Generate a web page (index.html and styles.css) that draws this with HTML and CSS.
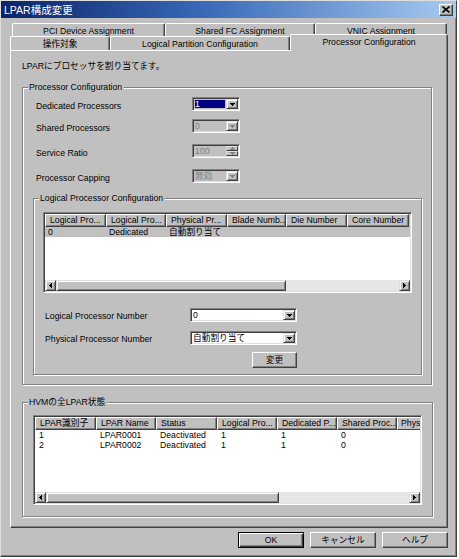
FILE: index.html
```html
<!DOCTYPE html>
<html>
<head>
<meta charset="utf-8">
<link rel="stylesheet" href="styles.css">
</head>
<body>
<div class="window">
  <div class="titlebar">
    <span class="title">LPAR構成変更</span>
    <span class="close"><svg width="8" height="7" viewBox="0 0 8 7"><path d="M0.5 0.5L7.5 6.5M7.5 0.5L0.5 6.5" stroke="#000" stroke-width="1.6"/></svg></span>
  </div>
  <div class="tabs">
    <div class="tabrow row1">
      <div class="tab tw-pci">PCI Device Assignment</div>
      <div class="tab tw-fc">Shared FC Assignment</div>
      <div class="tab tw-vnic">VNIC Assignment</div>
    </div>
    <div class="tabrow row2">
      <div class="tab tw-target">操作対象</div>
      <div class="tab tw-lpc">Logical Partition Configuration</div>
      <div class="tab tw-proc active">Processor Configuration</div>
    </div>
  </div>
  <div class="panel">
    <p class="desc">LPARにプロセッサを割り当てます。</p>
    <div class="group g1">
      <span class="legend">Processor Configuration</span>
      <div class="frow r1">
        <span class="flabel">Dedicated Processors</span>
        <div class="combo cw-s">
          <span class="cfield selected"><span class="seltext">1</span></span>
          <span class="cbtn"><svg width="5" height="3" viewBox="0 0 5 3"><path d="M0 0H5V1H4V2H3V3H2V2H1V1H0Z"/></svg></span>
        </div>
      </div>
      <div class="frow r2">
        <span class="flabel">Shared Processors</span>
        <div class="combo cw-s disabled">
          <span class="cfield">0</span>
          <span class="cbtn"><svg width="5" height="3" viewBox="0 0 5 3"><path d="M0 0H5V1H4V2H3V3H2V2H1V1H0Z"/></svg></span>
        </div>
      </div>
      <div class="frow r3">
        <span class="flabel">Service Ratio</span>
        <div class="combo cw-s disabled">
          <span class="cfield">100</span>
          <span class="spin">
            <span class="sbtnh"><svg width="5" height="3" viewBox="0 0 5 3"><path d="M2 0H3V1H4V2H5V3H0V2H1V1H2Z"/></svg></span>
            <span class="sbtnh"><svg width="5" height="3" viewBox="0 0 5 3"><path d="M0 0H5V1H4V2H3V3H2V2H1V1H0Z"/></svg></span>
          </span>
        </div>
      </div>
      <div class="frow r4">
        <span class="flabel">Processor Capping</span>
        <div class="combo cw-s disabled">
          <span class="cfield">無効</span>
          <span class="cbtn"><svg width="5" height="3" viewBox="0 0 5 3"><path d="M0 0H5V1H4V2H3V3H2V2H1V1H0Z"/></svg></span>
        </div>
      </div>

      <div class="group g2">
        <span class="legend">Logical Processor Configuration</span>
        <div class="lv lv1">
          <div class="lvgrid lvhead">
            <span class="hcell">Logical Pro...</span>
            <span class="hcell">Logical Pro...</span>
            <span class="hcell">Physical Pr...</span>
            <span class="hcell">Blade Numb...</span>
            <span class="hcell">Die Number</span>
            <span class="hcell">Core Number</span>
            <span class="hfill"></span>
          </div>
          <div class="lvgrid lvrow selrow">
            <span class="cell">0</span>
            <span class="cell">Dedicated</span>
            <span class="cell">自動割り当て</span>
            <span class="cell"></span>
            <span class="cell"></span>
            <span class="cell"></span>
            <span class="cell"></span>
          </div>
          <div class="lvbody"></div>
          <div class="hscroll">
            <span class="sbtn"><svg width="3" height="5" viewBox="0 0 3 5"><path d="M3 0V5H2V4H1V3H0V2H1V1H2V0Z"/></svg></span>
            <span class="thumb thumb1"></span>
            <span class="track"></span>
            <span class="sbtn"><svg width="3" height="5" viewBox="0 0 3 5"><path d="M0 0V5H1V4H2V3H3V2H2V1H1V0Z"/></svg></span>
          </div>
        </div>

        <div class="frow r5">
          <span class="flabel2">Logical Processor Number</span>
          <div class="combo cw-l">
            <span class="cfield white">0</span>
            <span class="cbtn"><svg width="5" height="3" viewBox="0 0 5 3"><path d="M0 0H5V1H4V2H3V3H2V2H1V1H0Z"/></svg></span>
          </div>
        </div>
        <div class="frow r6">
          <span class="flabel2">Physical Processor Number</span>
          <div class="combo cw-l">
            <span class="cfield white">自動割り当て</span>
            <span class="cbtn"><svg width="5" height="3" viewBox="0 0 5 3"><path d="M0 0H5V1H4V2H3V3H2V2H1V1H0Z"/></svg></span>
          </div>
        </div>
        <div class="btnrow">
          <span class="btn btn-change">変更</span>
        </div>
      </div>
    </div>

    <div class="group g3">
      <span class="legend">HVMの全LPAR状態</span>
      <div class="lv lv2">
        <div class="lvgrid lvhead">
          <span class="hcell">LPAR識別子</span>
          <span class="hcell">LPAR Name</span>
          <span class="hcell">Status</span>
          <span class="hcell">Logical Pro...</span>
          <span class="hcell">Dedicated P...</span>
          <span class="hcell">Shared Proc...</span>
          <span class="hcell hlast">Phys</span>
        </div>
        <div class="lvgrid lvrow">
          <span class="cell">1</span>
          <span class="cell">LPAR0001</span>
          <span class="cell">Deactivated</span>
          <span class="cell">1</span>
          <span class="cell">1</span>
          <span class="cell">0</span>
          <span class="cell"></span>
        </div>
        <div class="lvgrid lvrow">
          <span class="cell">2</span>
          <span class="cell">LPAR0002</span>
          <span class="cell">Deactivated</span>
          <span class="cell">1</span>
          <span class="cell">1</span>
          <span class="cell">0</span>
          <span class="cell"></span>
        </div>
        <div class="lvbody"></div>
        <div class="hscroll">
          <span class="sbtn"><svg width="3" height="5" viewBox="0 0 3 5"><path d="M3 0V5H2V4H1V3H0V2H1V1H2V0Z"/></svg></span>
          <span class="thumb thumb2"></span>
          <span class="track"></span>
          <span class="sbtn"><svg width="3" height="5" viewBox="0 0 3 5"><path d="M0 0V5H1V4H2V3H3V2H2V1H1V0Z"/></svg></span>
        </div>
      </div>
    </div>
  </div>
  <div class="buttons">
    <span class="btn btn-main default">OK</span>
    <span class="btn btn-main">キャンセル</span>
    <span class="btn btn-main">ヘルプ</span>
  </div>
</div>
</body>
</html>
```

FILE: styles.css
```css
* { box-sizing: border-box; }

body {
  margin: 0;
  background: #ffffff;
  font-family: "Liberation Sans", "Noto Sans CJK JP", sans-serif;
  font-size: 8.7px;
  color: #000;
}

.window {
  width: 457px;
  height: 557px;
  background: #c0c0c0;
  border: 1px solid;
  border-color: #dfdfdf #404040 #404040 #dfdfdf;
  box-shadow: inset -1px -1px #808080;
  display: flex;
  flex-direction: column;
}

/* title bar */
.titlebar {
  height: 17px;
  flex: none;
  background: linear-gradient(90deg, #0a246a 0%, #3a6ab8 45%, #a6caf0 100%);
  display: flex;
  align-items: center;
  justify-content: space-between;
  padding: 0 3px 0 3px;
}
.title {
  color: #fff;
  font-size: 10.5px;
  line-height: 12px;
}
.close {
  width: 14px;
  height: 12px;
  background: #c0c0c0;
  border: 1px solid;
  border-color: #fff #404040 #404040 #fff;
  box-shadow: inset -1px -1px #808080;
  display: flex;
  align-items: center;
  justify-content: center;
}

/* tabs */
.tabs { margin-top: 5px; flex: none; }
.tabrow { display: flex; }
.row1 { height: 13px; margin-left: 11px; }
.row2 { height: 14px; margin-left: 9px; }
.tab {
  height: 100%;
  border: 1px solid;
  border-bottom: none;
  border-color: #fff #404040 #fff #fff;
  border-radius: 2px 2px 0 0;
  box-shadow: inset -1px 0 #808080;
  display: flex;
  align-items: center;
  justify-content: center;
  white-space: nowrap;
  line-height: 10px;
  background: #c0c0c0;
}
.row1 .tab { padding-top: 1px; }
.tw-pci { width: 153px; }
.tw-fc { width: 150px; }
.tw-vnic { width: 132px; }
.tw-target { width: 100px; }
.tw-lpc { width: 180px; }
.tw-proc { width: 158px; }
.tab.active {
  height: 17px;
  margin-top: -2px;
  position: relative;
  z-index: 1;
  align-items: flex-start;
  padding-top: 2px;
}

/* panel */
.panel {
  flex: none;
  margin-left: 9px;
  width: 438px;
  height: 478px;
  border: 1px solid;
  border-color: #fff #404040 #404040 #fff;
  box-shadow: inset -1px -1px #808080;
  padding: 9px 0 0 11px;
}
.desc {
  margin: 0;
  height: 12px;
  line-height: 12px;
}

/* group boxes */
.group {
  position: relative;
  border: 1px solid #808080;
  box-shadow: inset 1px 1px #fff, 1px 1px #fff;
}
.legend {
  position: absolute;
  top: -7px;
  left: 5px;
  padding: 0 2px 0 1px;
  background: #c0c0c0;
  line-height: 12px;
  white-space: nowrap;
}
.g1 {
  margin-top: 15px;
  width: 410px;
  height: 298px;
  padding: 9px 0 0 10px;
}
.g2 {
  margin-top: 15px;
  width: 389px;
  height: 177px;
  padding: 13px 0 0 9px;
}
.g3 {
  margin-top: 17px;
  width: 411px;
  height: 115px;
  padding: 12px 0 0 10px;
}

/* form rows */
.frow {
  display: flex;
  align-items: center;
  height: 14px;
}
.r1 { margin-bottom: 8px; }
.r2 { margin-bottom: 11px; }
.r3 { margin-bottom: 11px; }
.r5 { margin-top: 15px; margin-bottom: 9px; }
.flabel {
  width: 159px;
  padding-left: 3px;
  padding-top: 3px;
  white-space: nowrap;
}
.flabel2 {
  width: 147px;
  padding-left: 2px;
  padding-top: 2px;
  white-space: nowrap;
}

/* combo boxes */
.combo {
  height: 14px;
  display: flex;
  border: 1px solid;
  border-color: #808080 #fff #fff #808080;
  box-shadow: inset 1px 1px #404040, inset -1px -1px #dfdfdf;
  padding: 1px;
  background: #c0c0c0;
}
.cw-s { width: 48px; }
.cw-l { width: 107px; }
.cfield {
  flex: 1;
  padding-left: 1px;
  line-height: 10px;
  white-space: nowrap;
  overflow: hidden;
}
.cfield.white { background: #fff; }
.cfield.selected {
  background: #000080;
  margin: 1px 1px 1px 1px;
  padding-left: 0;
  line-height: 8px;
}
.seltext { color: #fff; }
.disabled .cfield { color: #808080; }
.cbtn {
  width: 12px;
  flex: none;
  background: #c0c0c0;
  border: 1px solid;
  border-color: #dfdfdf #404040 #404040 #dfdfdf;
  box-shadow: inset 1px 1px #fff, inset -1px -1px #808080;
  display: flex;
  align-items: center;
  justify-content: center;
}
.cbtn svg { fill: #000; }
.disabled .cbtn svg, .disabled .sbtnh svg { fill: #808080; }
.spin {
  width: 12px;
  flex: none;
  display: flex;
  flex-direction: column;
}
.sbtnh {
  flex: 1;
  background: #c0c0c0;
  border: 1px solid;
  border-color: #dfdfdf #404040 #404040 #dfdfdf;
  display: flex;
  align-items: center;
  justify-content: center;
}

/* buttons */
.btnrow {
  margin-top: 7px;
  padding-left: 209px;
  display: flex;
}
.btn {
  height: 16px;
  background: #c0c0c0;
  border: 1px solid;
  border-color: #fff #404040 #404040 #fff;
  box-shadow: inset -1px -1px #808080;
  display: flex;
  align-items: center;
  justify-content: center;
  line-height: 10px;
  white-space: nowrap;
}
.btn-change { width: 45px; }
.btn-main { width: 66px; }
.btn.default {
  border-color: #000;
  box-shadow: inset 1px 1px #fff, inset -1px -1px #404040, inset -2px -2px #808080;
}
.buttons {
  margin-top: 4px;
  display: flex;
  justify-content: flex-end;
  gap: 6px;
  padding-right: 8px;
}

/* list views */
.lv {
  background: #fff;
  border: 1px solid;
  border-color: #808080 #fff #fff #808080;
  box-shadow: inset 1px 1px #404040, inset -1px -1px #dfdfdf;
  padding: 1px;
  display: flex;
  flex-direction: column;
}
.lv1 { width: 369px; height: 81px; }
.lv2 { width: 389px; height: 90px; }
.lvgrid { display: grid; }
.lv1 .lvgrid { grid-template-columns: 61px 60px 61px 59px 61px 62px 1fr; }
.lv2 .lvgrid { grid-template-columns: 61px 60px 61px 60px 60px 60px 1fr; }
.lvhead {
  height: 13px;
  flex: none;
  background: #c0c0c0;
}
.hcell {
  border: 1px solid;
  border-color: #fff #404040 #404040 #fff;
  box-shadow: inset -1px -1px #808080;
  padding: 0 3px 0 4px;
  line-height: 11px;
  white-space: nowrap;
  overflow: hidden;
}
.hcell.hlast {
  padding: 0 0 0 3px;
  border-right: none;
  box-shadow: none;
}
.hfill { background: #c0c0c0; }
.lvrow {
  height: 10px;
  flex: none;
}
.selrow { background: #c0c0c0; }
.cell {
  padding-left: 3px;
  line-height: 10px;
  white-space: nowrap;
  overflow: hidden;
}
.lv2 .cell { padding-left: 4px; }
.lvbody { flex: 1; }

/* scroll bars */
.hscroll {
  height: 11px;
  flex: none;
  display: flex;
  background: #c0c0c0;
}
.sbtn, .thumb {
  background: #c0c0c0;
  border: 1px solid;
  border-color: #dfdfdf #404040 #404040 #dfdfdf;
  box-shadow: inset 1px 1px #fff, inset -1px -1px #808080;
}
.sbtn {
  width: 11px;
  flex: none;
  display: flex;
  align-items: center;
  justify-content: center;
}
.sbtn svg { fill: #000; }
.thumb1 { width: 230px; flex: none; }
.thumb2 { width: 233px; flex: none; }
.track {
  flex: 1;
  background: #e6e6e6;
}
```
